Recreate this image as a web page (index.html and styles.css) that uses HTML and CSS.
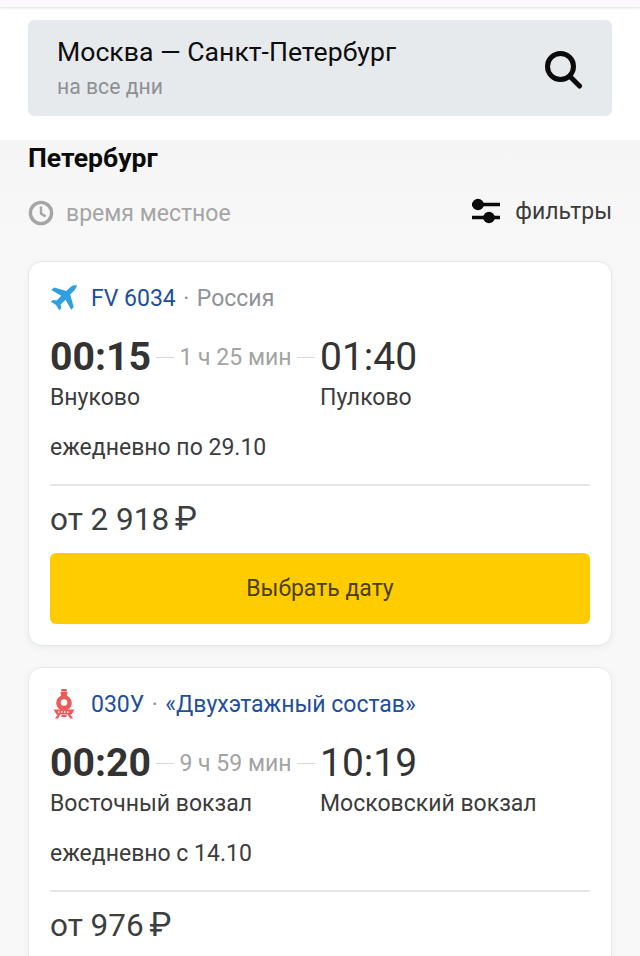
FILE: index.html
```html
<!DOCTYPE html>
<html lang="ru">
<head>
<meta charset="utf-8">
<title>Москва — Санкт-Петербург</title>
<link rel="stylesheet" href="styles.css">
</head>
<body>
<div class="topbar"></div>
<header class="header">
  <div class="search">
    <div class="search-text">
      <div class="route">Москва — Санкт-Петербург</div>
      <div class="days">на все дни</div>
    </div>
    <svg class="search-icon" viewBox="0 0 40 40" width="40" height="40"><circle cx="17.500" cy="17.500" r="13" fill="none" stroke="#0b0b0b" stroke-width="5"/><path d="M27 27.500l9.500 9.500" fill="none" stroke="#0b0b0b" stroke-width="5" stroke-linecap="round"/></svg>
  </div>
</header>
<main class="main">
  <h2 class="title">Петербург</h2>
  <div class="tools">
    <div class="tz">
      <svg class="clock" viewBox="0 0 26 26" width="26" height="26"><circle cx="13" cy="13" r="10.600" fill="none" stroke="#a5a5a5" stroke-width="3.400"/><path d="M13 6.500V13.500l4.600 3" fill="none" stroke="#a5a5a5" stroke-width="2.400"/></svg>
      <span>время местное</span>
    </div>
    <div class="filters">
      <svg class="sliders" viewBox="0 0 30 26" width="30" height="26"><path d="M1 6.500H29M1 19.500H29" stroke="#0b0b0b" stroke-width="3.400"/><circle cx="7" cy="6.500" r="5.800" fill="#0b0b0b"/><circle cx="18" cy="19.500" r="5.800" fill="#0b0b0b"/></svg>
      <span>фильтры</span>
    </div>
  </div>

  <article class="card">
    <div class="head">
      <svg class="kind" viewBox="0 0 28 28" width="28" height="28"><path d="M26.500 1.500c-1.800-.9-4.500-.1-6.300 1.700l-3.700 3.700L4.200 3.500 1.300 6l10 5.700-4.600 4.900-3.800-.7L1 17.800l5 3.200 3.300 5.200 2-2-.7-3.800 5-4.700 5.600 10 2.500-2.800-3.500-12.300 3.800-3.800c1.800-1.800 3.400-5.300 3-6.300z" fill="#2f9fe0"/></svg>
      <span class="num">FV 6034</span><span class="dot">·</span><span class="meta">Россия</span>
    </div>
    <div class="times">
      <div class="col-from">
        <div class="row-time"><b class="dep">00:15</b><i class="dash"></i><span class="dur">1 ч 25 мин</span><i class="dash"></i></div>
        <div class="place">Внуково</div>
      </div>
      <div class="col-to">
        <div class="arr">01:40</div>
        <div class="place">Пулково</div>
      </div>
    </div>
    <div class="sched">ежедневно по 29.10</div>
    <div class="line"></div>
    <div class="price">от 2 918 <span class="rub">₽</span></div>
    <div class="btn">Выбрать дату</div>
  </article>

  <article class="card">
    <div class="head">
      <svg class="kind" viewBox="0 0 28 30" width="28" height="30"><g fill="#ec5a5c"><rect x="11" y="0" width="6" height="2.500" rx="1"/><path d="M10.500 3h7l-.8 5.500h-5.400z"/><circle cx="14" cy="14" r="7.800"/><path d="M3.500 20.500h21l-3 5h-15z"/><path d="M8 25l-3 4.500h3l2.500-4.500zM20 25l3 4.500h-3L17.500 25zM11.500 26h5v2h-5z"/></g><circle cx="14" cy="13.500" r="3.300" fill="#fff"/><path d="M8 23h12" stroke="#fff" stroke-width="1.300" stroke-dasharray="1.500 1.500"/></svg>
      <span class="num">030У</span><span class="dot">·</span><span class="num">«Двухэтажный состав»</span>
    </div>
    <div class="times">
      <div class="col-from">
        <div class="row-time"><b class="dep">00:20</b><i class="dash"></i><span class="dur">9 ч 59 мин</span><i class="dash"></i></div>
        <div class="place">Восточный вокзал</div>
      </div>
      <div class="col-to">
        <div class="arr">10:19</div>
        <div class="place">Московский вокзал</div>
      </div>
    </div>
    <div class="sched">ежедневно с 14.10</div>
    <div class="line"></div>
    <div class="price">от 976 <span class="rub">₽</span></div>
  </article>
</main>
</body>
</html>
```
FILE: styles.css
```css
* { box-sizing: border-box; }
html, body { margin: 0; padding: 0; }
body {
  width: 640px;
  height: 956px;
  overflow: hidden;
  background: #f7f7f7;
  font-family: Roboto, "Liberation Sans", sans-serif;
  color: #3c3c3c;
}
.topbar {
  height: 7px;
  background: #fbf9fb;
  box-shadow: 0 1px 3px rgba(0, 0, 0, .12);
  position: relative;
}
.header {
  height: 133px;
  padding: 13px 28px 0;
  background: #fff;
}
.search {
  height: 96px;
  padding: 0 29px;
  background: #e7eaed;
  border-radius: 6px;
  display: flex;
  align-items: center;
  justify-content: space-between;
}
.route {
  font-size: 26.600px;
  line-height: 30px;
  color: #0d0d0d;
}
.days {
  margin-top: 8px;
  font-size: 21.200px;
  line-height: 24px;
  color: #8d9094;
}
.search-icon { margin-top: 1px; }
.main {
  height: 816px;
  overflow: hidden;
  padding: 0 28px;
  background: linear-gradient(#f5f5f5, #f8f8f8 100px);
}
.title {
  margin: 4px 0 0;
  font-size: 26.600px;
  line-height: 28px;
  font-weight: 700;
  color: #0b0b0b;
}
.tools {
  margin-top: 26px;
  height: 30px;
  display: flex;
  align-items: center;
  justify-content: space-between;
}
.tz {
  display: flex;
  align-items: center;
  gap: 12px;
  font-size: 23px;
  color: #a5a5a5;
}
.filters {
  display: flex;
  align-items: center;
  gap: 14px;
  margin-bottom: 4px;
  font-size: 23px;
  color: #3c3c3c;
}
.card {
  margin-top: 33px;
  height: 385px;
  padding: 20px 21px 0;
  background: #fff;
  border: 1px solid #e6e8ea;
  border-radius: 14px;
  box-shadow: 0 2px 6px rgba(70, 90, 110, .08);
}
.card + .card { margin-top: 21px; }
.head {
  height: 32px;
  display: flex;
  align-items: center;
  font-size: 23px;
}
.kind { margin-right: 13px; flex: none; }
.num { color: #1d4f9c; }
.dot { margin: 0 7.500px; color: #8f9397; }
.meta { color: #8f9397; }
.times {
  margin-top: 23px;
  display: flex;
}
.col-from { width: 270px; }
.row-time {
  height: 40px;
  display: flex;
  align-items: center;
}
.dep {
  font-size: 39.200px;
  font-weight: 700;
  color: #333;
}
.dash {
  display: block;
  flex: 1;
  height: 1px;
  background: #d8d8d8;
  margin: 0 5px;
}
.dur {
  font-size: 23px;
  color: #a3a3a3;
}
.arr {
  height: 40px;
  line-height: 40px;
  font-size: 39px;
  color: #333;
}
.place {
  margin-top: 7px;
  font-size: 23px;
  line-height: 28px;
  color: #3c3c3c;
}
.sched {
  margin-top: 22px;
  font-size: 23px;
  line-height: 28px;
  color: #3c3c3c;
}
.line {
  margin-top: 22px;
  height: 2px;
  background: #e5e6e7;
}
.price {
  margin-top: 13px;
  font-size: 31.500px;
  line-height: 40px;
  color: #3c3f42;
}
.rub { font-size: 33px; margin-left: -2px; }
.btn {
  margin-top: 13px;
  height: 71px;
  background: #ffcc00;
  border-radius: 6px;
  display: flex;
  align-items: center;
  justify-content: center;
  font-size: 23px;
  color: #4a3f14;
}
```
